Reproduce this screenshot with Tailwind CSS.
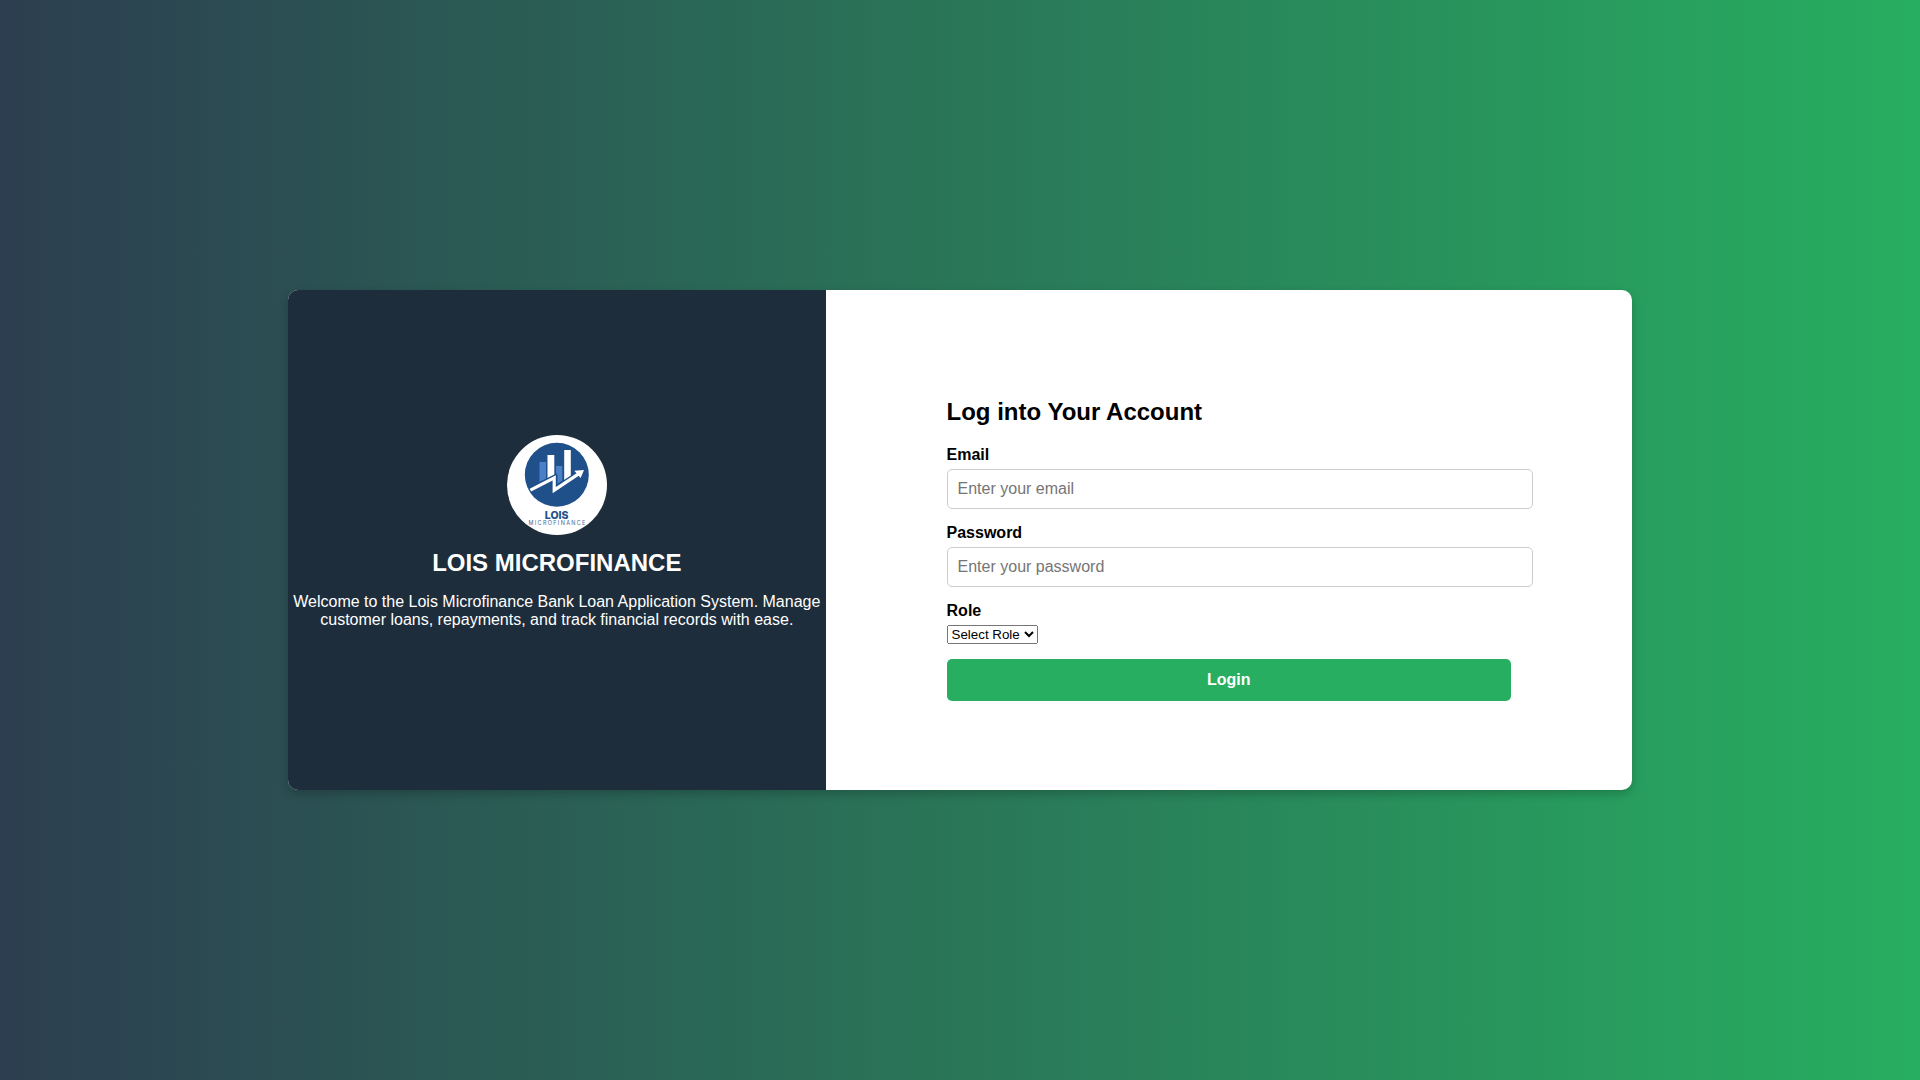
<!DOCTYPE html>
<html lang="en">
<head>
<meta charset="UTF-8">
<meta name="viewport" content="width=device-width, initial-scale=1">
<title>Lois Microfinance - Login</title>
<script src="https://cdn.jsdelivr.net/npm/@tailwindcss/browser@4"></script>
</head>
<body class="flex min-h-screen items-center justify-center bg-[linear-gradient(to_right,#2c3e50,#27ae60)] font-['Liberation_Sans',Arial,sans-serif] text-base/[18px] text-black">
  <main class="flex min-h-[500px] w-[70%] overflow-hidden rounded-[10px] bg-white shadow-[0_4px_10px_rgba(0,0,0,0.2)]">
    <section class="flex w-2/5 flex-col items-center justify-center bg-[#1e2d3b] pb-4 text-center text-white">
      <svg class="size-[100px] rounded-full" viewBox="10 10 100 100" role="img" aria-label="Lois Microfinance logo">
        <rect x="10" y="10" width="100" height="100" fill="#fff"/>
        <circle cx="59.8" cy="49.8" r="32" fill="#1f5089"/>
        <path d="M42.5 37H49V54L42.5 57.5Z" fill="#4a80c8"/>
        <path d="M50.5 30H57.3V50L50.5 53.5Z" fill="#fff"/>
        <path d="M59 41H65.3V55.5L60.5 59V49.5L59 50Z" fill="#4a80c8"/>
        <path d="M67.2 25H73.8V51.5L67.2 56Z" fill="#fff"/>
        <path d="M33 64.2L57.3 52.3L56.8 64.5L81 48.8" fill="none" stroke="#1f5089" stroke-width="5"/>
        <path d="M33.4 65.2L57.2 52.9V65.2L82 48.6" fill="none" stroke="#fff" stroke-width="3.2"/>
        <path d="M77.3 45.8L87 45L83.6 53Z" fill="#fff"/>
        <text x="59.7" y="94.2" text-anchor="middle" font-family="Inter, sans-serif" font-size="10.5" font-weight="800" fill="#1f5089">LOIS</text>
        <text x="60.6" y="100.3" text-anchor="middle" class="tracking-[0.24em]" font-family="Inter, sans-serif" font-size="5.5" fill="#3f679b">MICROFINANCE</text>
      </svg>
      <h1 class="mt-[14px] text-2xl/[28px] font-bold">LOIS MICROFINANCE</h1>
      <p class="mt-4">Welcome to the Lois Microfinance Bank Loan Application System. Manage customer loans, repayments, and track financial records with ease.</p>
    </section>
    <section class="flex w-3/5 flex-col items-center justify-center">
      <form class="w-[70%] pt-[18px]">
        <h2 class="mb-5 text-2xl/[29px] font-bold">Log into Your Account</h2>
        <div class="mb-[15px]">
          <label for="email" class="mb-[5px] block font-bold">Email</label>
          <input id="email" type="email" placeholder="Enter your email" class="block h-10 w-[calc(100%+22px)] rounded-[5px] border border-[#ccc] px-2.5 placeholder:text-[#757575]">
        </div>
        <div class="mb-[15px]">
          <label for="password" class="mb-[5px] block font-bold">Password</label>
          <input id="password" type="password" placeholder="Enter your password" class="block h-10 w-[calc(100%+22px)] rounded-[5px] border border-[#ccc] px-2.5 placeholder:text-[#757575]">
        </div>
        <div class="mb-[15px] flex flex-col items-start">
          <label for="role" class="mb-[5px] block font-bold">Role</label>
          <select id="role" class="[all:revert]">
            <option>Select Role</option>
          </select>
        </div>
        <button type="submit" class="block h-[42px] w-full rounded-[5px] bg-[#27ae60] font-bold text-white">Login</button>
      </form>
    </section>
  </main>
</body>
</html>
